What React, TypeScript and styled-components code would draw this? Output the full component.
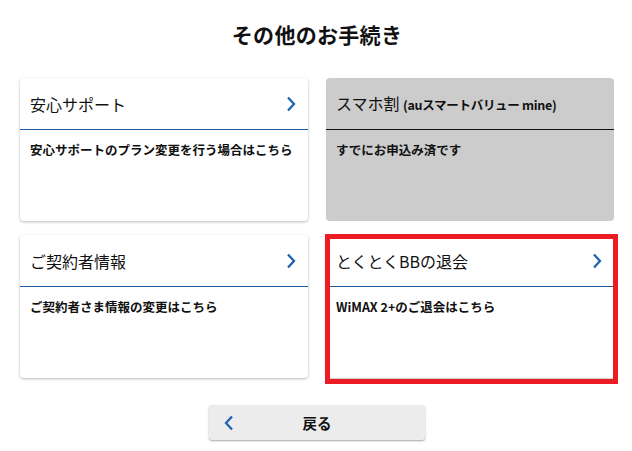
import React from "react";
import styled, { createGlobalStyle } from "styled-components";

const Global = createGlobalStyle`
  html, body { margin: 0; padding: 0; background: #ffffff; }
  body { font-family: "Noto Sans CJK JP", "Noto Sans", sans-serif; color: #111; }
`;

const Page = styled.div`
  width: 632px;
  height: 451px;
  box-sizing: border-box;
  padding: 18px 18px 0 20px;
  display: flex;
  flex-direction: column;
`;

const Title = styled.h1`
  margin: 0;
  font-size: 21px;
  line-height: 33px;
  font-weight: 700;
  text-align: center;
  letter-spacing: 0.3px;
`;

const Grid = styled.div`
  margin-top: 27px;
  display: grid;
  grid-template-columns: 288px 288px;
  grid-auto-rows: 143px;
  column-gap: 18px;
  row-gap: 14px;
`;

const Card = styled.div<{ $disabled?: boolean }>`
  position: relative;
  display: flex;
  flex-direction: column;
  border-radius: 4px;
  background: ${(p) => (p.$disabled ? "#cccccc" : "#ffffff")};
  box-shadow: ${(p) => (p.$disabled ? "none" : "0 1px 3px rgba(0,0,0,0.28)")};
  cursor: ${(p) => (p.$disabled ? "default" : "pointer")};
`;

const CardHeader = styled.div<{ $disabled?: boolean }>`
  height: 51px;
  flex: none;
  display: flex;
  align-items: center;
  justify-content: space-between;
  padding: 0 12px 0 10px;
  border-bottom: 1.5px solid ${(p) => (p.$disabled ? "#111" : "#1a5a9e")};
`;

const CardTitle = styled.div`
  font-size: 16px;
  font-weight: 400;
  line-height: 24px;
  white-space: nowrap;
`;

const Sub = styled.span`
  font-size: 12.5px;
  font-weight: 700;
  letter-spacing: -0.3px;
`;

const CardBody = styled.div`
  padding: 10px 10px 0 10px;
  font-size: 12.5px;
  font-weight: 700;
  line-height: 19px;
  white-space: nowrap;
`;

const Highlight = styled.div`
  position: absolute;
  left: -1px;
  top: -1px;
  right: -4px;
  bottom: -6px;
  border: 5px solid #ec1c24;
  pointer-events: none;
`;

const Footer = styled.div`
  margin-top: 27px;
  display: flex;
  justify-content: center;
`;

const BackButton = styled.button`
  width: 216px;
  height: 35px;
  border: none;
  border-radius: 3px;
  background: #ececec;
  box-shadow: 0 1px 2px rgba(0,0,0,0.35);
  display: flex;
  align-items: center;
  padding: 0 0 0 15px;
  font-family: "Noto Sans CJK JP", "Noto Sans", sans-serif;
  font-size: 14.5px;
  font-weight: 700;
  color: #111;
  position: relative;
  cursor: pointer;
`;

const BackLabel = styled.span`
  position: absolute;
  left: 0;
  right: 0;
  text-align: center;
  pointer-events: none;
`;

const Chevron = ({ dir = "right" }: { dir?: "left" | "right" }) => (
  <svg width="10" height="16" viewBox="0 0 10 16" fill="none">
    <path
      d={dir === "right" ? "M2 1.5 L8 8 L2 14.5" : "M8 1.5 L2 8 L8 14.5"}
      stroke="#1f63b0"
      strokeWidth="2.3"
      strokeLinecap="butt"
      strokeLinejoin="miter"
    />
  </svg>
);

type Item = { title: React.ReactNode; desc: string; disabled?: boolean; highlight?: boolean };

const items: Item[] = [
  { title: "安心サポート", desc: "安心サポートのプラン変更を行う場合はこちら" },
  {
    title: (
      <>
        スマホ割 <Sub>(auスマートバリュー mine)</Sub>
      </>
    ),
    desc: "すでにお申込み済です",
    disabled: true,
  },
  { title: "ご契約者情報", desc: "ご契約者さま情報の変更はこちら" },
  { title: "とくとくBBの退会", desc: "WiMAX 2+のご退会はこちら", highlight: true },
];

export default function App() {
  return (
    <>
      <Global />
      <Page>
        <Title>その他のお手続き</Title>
        <Grid>
          {items.map((it, i) => (
            <Card key={i} $disabled={it.disabled}>
              <CardHeader $disabled={it.disabled}>
                <CardTitle>{it.title}</CardTitle>
                {!it.disabled && <Chevron />}
              </CardHeader>
              <CardBody>{it.desc}</CardBody>
              {it.highlight && <Highlight />}
            </Card>
          ))}
        </Grid>
        <Footer>
          <BackButton>
            <Chevron dir="left" />
            <BackLabel>戻る</BackLabel>
          </BackButton>
        </Footer>
      </Page>
    </>
  );
}
